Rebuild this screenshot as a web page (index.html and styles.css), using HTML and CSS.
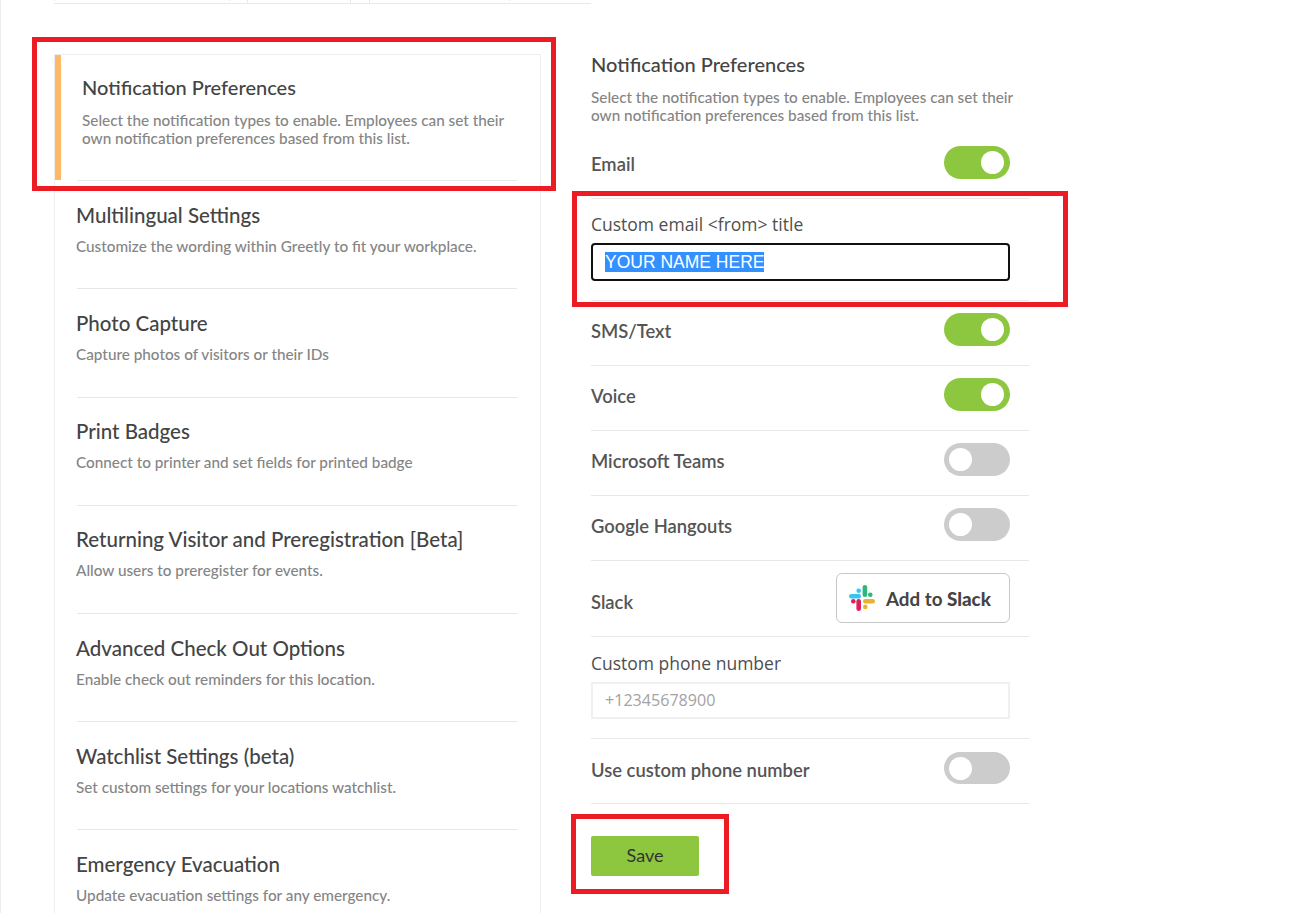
FILE: index.html
```html
<!DOCTYPE html>
<html lang="en">
<head>
<meta charset="utf-8">
<title>Notification Preferences</title>
<link rel="stylesheet" href="styles.css">
</head>
<body>
<div class="page">
  <div class="topbar"><span class="tick t1"></span><span class="tick t2"></span><span class="tick t3"></span><span class="tick small t4"></span><span class="tick small t5"></span><span class="tick small t6"></span></div>
  <div class="columns">
    <ul class="menu">
      <li class="item active"><h3>Notification Preferences</h3><p>Select the notification types to enable. Employees can set their own notification preferences based from this list.</p></li>
      <li class="item"><h3>Multilingual Settings</h3><p>Customize the wording within Greetly to fit your workplace.</p></li>
      <li class="item tall"><h3>Photo Capture</h3><p>Capture photos of visitors or their IDs</p></li>
      <li class="item snug"><h3>Print Badges</h3><p>Connect to printer and set fields for printed badge</p></li>
      <li class="item snug"><h3>Returning Visitor and Preregistration [Beta]</h3><p>Allow users to preregister for events.</p></li>
      <li class="item"><h3>Advanced Check Out Options</h3><p>Enable check out reminders for this location.</p></li>
      <li class="item"><h3>Watchlist Settings (beta)</h3><p>Set custom settings for your locations watchlist.</p></li>
      <li class="item"><h3>Emergency Evacuation</h3><p>Update evacuation settings for any emergency.</p></li>
    </ul>
    <section class="panel">
      <h2>Notification Preferences</h2>
      <p class="lead">Select the notification types to enable. Employees can set their own notification preferences based from this list.</p>
      <div class="row first"><span>Email</span><i class="toggle on"></i></div>
      <div class="field name-field"><label>Custom email &lt;from&gt; title</label><div class="name-box"><span class="selected">YOUR NAME HERE</span></div></div>
      <div class="row"><span>SMS/Text</span><i class="toggle on"></i></div>
      <div class="row"><span>Voice</span><i class="toggle on"></i></div>
      <div class="row"><span>Microsoft Teams</span><i class="toggle"></i></div>
      <div class="row"><span>Google Hangouts</span><i class="toggle"></i></div>
      <div class="row slack-row"><span class="slack-label">Slack</span>
        <div class="slack-btn">
          <svg width="28" height="28" viewBox="0 0 28 28" aria-hidden="true">
            <rect x="1" y="10" width="12" height="4.6" rx="2.3" fill="#36c5f0"/>
            <rect x="8.4" y="4.5" width="4.6" height="4.6" rx="2.3" fill="#36c5f0"/>
            <rect x="14.6" y="1" width="4.6" height="12" rx="2.3" fill="#2eb67d"/>
            <rect x="20" y="8.4" width="4.6" height="4.6" rx="2.3" fill="#2eb67d"/>
            <rect x="15" y="15" width="12" height="4.6" rx="2.3" fill="#ecb22e"/>
            <rect x="15" y="20.6" width="4.6" height="4.6" rx="2.3" fill="#ecb22e"/>
            <rect x="8.4" y="15" width="4.6" height="12" rx="2.3" fill="#e01e5a"/>
            <rect x="3" y="15" width="4.6" height="4.6" rx="2.3" fill="#e01e5a"/>
          </svg>
          <span>Add to <b>Slack</b></span>
        </div>
      </div>
      <div class="field phone-field"><label>Custom phone number</label><div class="phone-box">+12345678900</div></div>
      <div class="row use-row"><span>Use custom phone number</span><i class="toggle"></i></div>
      <button class="save" type="button">Save</button>
    </section>
  </div>
  <div class="mark m1"></div>
  <div class="mark m2"></div>
  <div class="mark m3"></div>
</div>
</body>
</html>
```
FILE: styles.css
```css
* { box-sizing: border-box; }
html, body { margin: 0; height: 913px; overflow: hidden; background: #fff; }
body { font-family: "Lato", "Noto Sans", sans-serif; color: #4a4a4a; }
.page { position: relative; height: 913px; border-left: 1px solid #eee; overflow: hidden; }
.topbar { position: relative; height: 4px; margin-left: 53px; width: 537px; border-bottom: 1px solid #e8e8e8; }
.tick { position: absolute; top: 0; width: 1px; height: 3px; background: #e8e8e8; }
.tick.small { height: 1px; }
.t1 { left: 193px; } .t2 { left: 296px; } .t3 { left: 315px; }
.t4 { left: 0; } .t5 { left: 175px; } .t6 { left: 455px; }
.columns { display: flex; align-items: flex-start; padding: 50px 0 0 53px; gap: 50px; }
.menu { list-style: none; margin: 0; padding: 0; width: 487px; flex: none; height: 870px; border: 1px solid #eee; }
.item { height: 108px; margin: 0 23px 0 22px; padding-top: 21px; border-bottom: 1px solid #e6e6e6; }
.item.tall { height: 109px; }
.item.snug { padding-top: 20px; }
.item h3 { margin: 0 0 0 -1px; font-size: 20.5px; line-height: 27px; font-weight: 500; color: #444; }
.item p { margin: 8px 0 0 -1px; font-size: 15.3px; line-height: 18px; font-weight: 500; color: #858585; }
.item.active { height: 126px; margin: 0 23px 0 0; padding: 19px 0 0 27px; border-bottom: 0; position: relative; background: linear-gradient(#e6e6e6, #e6e6e6) 22px 100% / 100% 1px no-repeat; }
.item.active h3 { margin-left: 0; font-size: 20px; }
.item.active p { margin: 10px 0 0; width: 430px; }
.item.active::before { content: ""; position: absolute; left: 0; top: 0; bottom: 1px; width: 6px; background: #ffb866; }
.panel { width: 438px; flex: none; }
.panel h2 { margin: -3px 0 0; font-size: 20px; line-height: 27px; font-weight: 500; color: #444; }
.lead { margin: 10px 0 0; width: 425px; font-size: 15.3px; line-height: 18px; font-weight: 500; color: #858585; }
.row { display: flex; align-items: center; justify-content: space-between; padding: 12px 19px 19px 0; border-bottom: 1px solid #e8e8e8; font-size: 18.4px; font-weight: 600; color: #555; height: 65px; }
.row > span { padding-top: 3px; }
.row > .slack-label { padding-top: 8px; }
.row.first { height: 75px; padding: 22px 19px 19px 0; }
.toggle { display: block; position: relative; width: 66px; height: 33px; border-radius: 17px; background: #ccc; }
.toggle::after { content: ""; position: absolute; left: 5px; top: 5px; width: 23px; height: 23px; border-radius: 50%; background: #fff; }
.toggle.on { background: #8dc63f; }
.toggle.on::after { left: 37px; }
.field { border-bottom: 1px solid #e8e8e8; }
.field label { display: block; font-family: "Open Sans", sans-serif; font-size: 17.5px; line-height: 22px; color: #4f4f4f; }
.name-field { height: 102px; padding-top: 14px; }
.name-box { margin-top: 8px; width: 419px; height: 38px; border: 2px solid #111; border-radius: 4px; padding: 5px 0 0 12px; font: 17.5px/24px "Liberation Sans", Arial, sans-serif; color: #fff; }
.selected { background: #3390ff; display: inline-block; height: 20px; line-height: 20px; }
.slack-row { height: 76px; padding: 12px 19px 13px 0; }
.slack-btn { display: flex; align-items: center; gap: 10px; width: 174px; height: 50px; padding-left: 11px; border: 1px solid #c8c8c8; border-radius: 6px; font-size: 18.8px; font-weight: 700; color: #444; }
.slack-btn b { font-weight: 900; }
.phone-field { height: 102px; padding-top: 15px; }
.phone-box { margin-top: 8px; width: 419px; height: 37px; border: 2px solid #f0f0f0; padding: 0 0 0 12px; font: 16.1px/33px "Open Sans", sans-serif; color: #a3a3a3; }
.use-row { padding: 13px 19px 19px 0; }
.use-row .toggle { height: 32px; }
.save { display: block; margin-top: 32px; width: 108px; height: 40px; padding: 0 0 2px; border: 0; border-radius: 2px; background: #8dc63f; font: 400 18px "Lato", sans-serif; color: #333; }
.mark { position: absolute; border: 5px solid #ed1c24; }
.m1 { left: 31px; top: 37px; width: 524px; height: 154px; }
.m2 { left: 571px; top: 191px; width: 496px; height: 116px; }
.m3 { left: 570px; top: 814px; width: 158px; height: 80px; }
```
